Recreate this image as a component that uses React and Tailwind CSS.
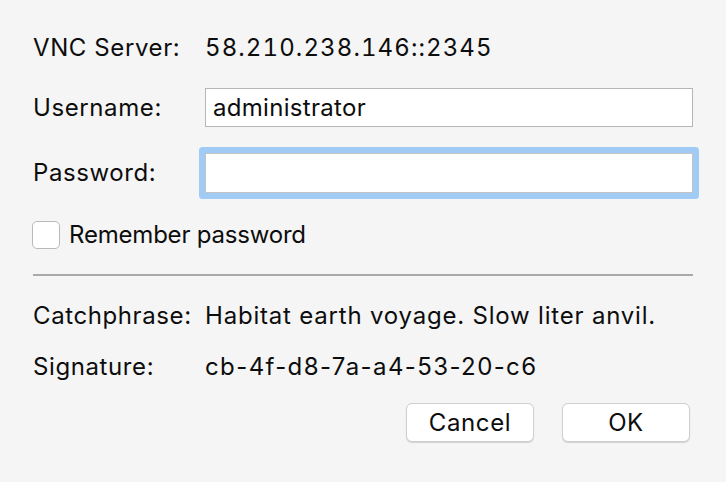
import { useState } from "react";

const font = {
  fontFamily: "Inter, 'Liberation Sans', sans-serif",
};

const Row = ({ label, children, className = "" }) => (
  <div className={`flex items-center ${className}`}>
    <div className="w-[172px] shrink-0">{label}</div>
    <div className="flex-1 min-w-0">{children}</div>
  </div>
);

export default function App() {
  const [username, setUsername] = useState("administrator");
  const [password, setPassword] = useState("");
  const [remember, setRemember] = useState(false);

  return (
    <div
      className="w-[726px] h-[482px] bg-[#f5f5f5] text-[24px] tracking-[0.6px] text-[#0d0d0d] pl-[33px] pr-[33px] pt-[28px] overflow-hidden"
      style={font}
    >
      {/* Server */}
      <Row label="VNC Server:" className="h-[40px]">
        <span className="tracking-[1.1px]" style={{ fontFeatureSettings: '"tnum"' }}>
          58.210.238.146::2345
        </span>
      </Row>

      {/* Username */}
      <Row label="Username:" className="h-[39px] mt-[20px]">
        <input
          value={username}
          onChange={(e) => setUsername(e.target.value)}
          className="w-full h-[39px] bg-white border border-[#b6b6b6] px-[7px] text-[24px] tracking-[0.3px] text-[#0d0d0d] outline-none"
          style={font}
        />
      </Row>

      {/* Password */}
      <Row label="Password:" className="h-[40px] mt-[26px]">
        <input
          type="password"
          value={password}
          onChange={(e) => setPassword(e.target.value)}
          className="w-full h-[40px] bg-white border border-[#c4c4c4] rounded-[1px] px-[7px] outline-none shadow-[0_0_0_6px_#9fcbf5]"
        />
      </Row>

      {/* Remember */}
      <label className="flex items-center gap-[9px] h-[28px] mt-[28px] -ml-px">
        <button
          type="button"
          onClick={() => setRemember(!remember)}
          className="w-[28px] h-[28px] rounded-[5px] bg-white border border-[#b9b9b9] flex items-center justify-center"
        >
          {remember && <span className="text-[18px] leading-none">✓</span>}
        </button>
        <span className="tracking-[-0.2px]">Remember password</span>
      </label>

      {/* Divider */}
      <div className="h-[2px] bg-[#a9a9a9] mt-[25px]" />

      {/* Info */}
      <Row label="Catchphrase:" className="h-[40px] mt-[20px]">
        <span className="tracking-[0.8px]">Habitat earth voyage. Slow liter anvil.</span>
      </Row>
      <Row label="Signature:" className="h-[40px] mt-[11px]">
        <span className="tracking-[1.4px]">cb-4f-d8-7a-a4-53-20-c6</span>
      </Row>

      {/* Buttons */}
      <div className="flex justify-end gap-[28px] mt-[16px] pr-[3px]">
        <button className="w-[128px] h-[39px] rounded-[6px] bg-white border border-[#cfcfcf] shadow-[0_1px_1px_rgba(0,0,0,0.15)] text-[24px] text-[#0d0d0d]">
          Cancel
        </button>
        <button className="w-[128px] h-[39px] rounded-[6px] bg-white border border-[#cfcfcf] shadow-[0_1px_1px_rgba(0,0,0,0.15)] text-[24px] text-[#0d0d0d]">
          OK
        </button>
      </div>
    </div>
  );
}
